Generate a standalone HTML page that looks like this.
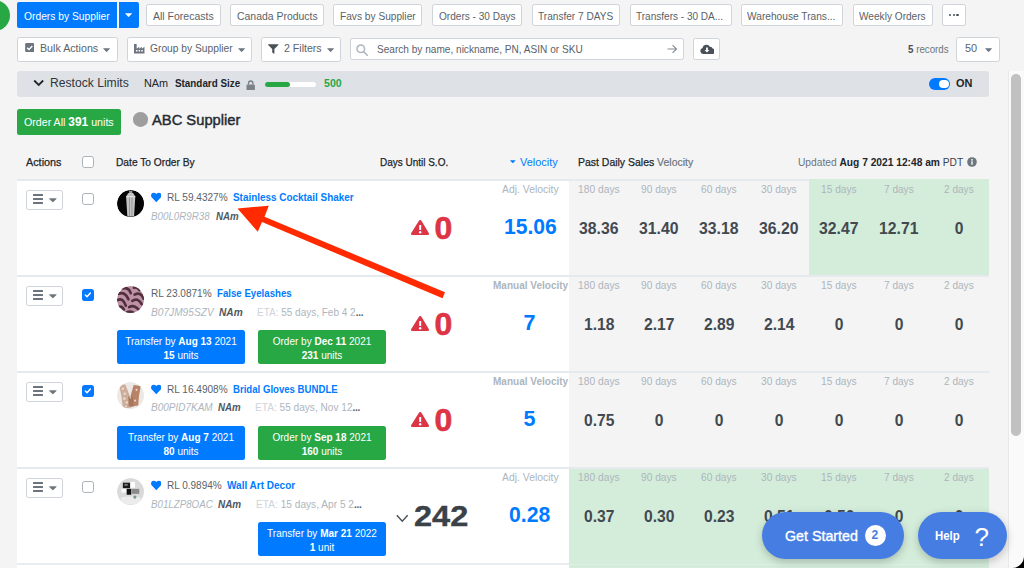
<!DOCTYPE html>
<html><head><meta charset="utf-8"><title>Orders by Supplier</title>
<style>
*{box-sizing:border-box;margin:0;padding:0}
html,body{width:1024px;height:568px;overflow:hidden;background:#f4f4f4;font-family:"Liberation Sans",sans-serif;font-size:11px;color:#212529}
.a{position:absolute;display:block}
.t{position:absolute;white-space:nowrap;display:block}
b{font-weight:bold}
</style></head><body>
<div class="a" style="left:-21.4px;top:-0.45px;width:31.5px;height:31.5px;background:#28a745;border-radius:15.75px;"></div>
<div class="a" style="left:17px;top:2px;width:99.5px;height:25.5px;background:#007bff;border-radius:2px;border-radius:2px 0 0 2px;"></div>
<div class="a" style="left:119px;top:2px;width:19.5px;height:25.5px;background:#007bff;border-radius:0 2px 2px 0;"></div>
<svg class="a" style="left:125.1px;top:13.2px" width="7.2" height="4.1" viewBox="0 0 7.8 4.4"><path d="M.5.2h6.800q.5.200.1.700L4.300 4.100q-.4.300-.8 0L.4.900Q0 .4.500.2z" fill="#fff"/></svg>
<div class="a" style="left:146.2px;top:3.9px;width:75.2px;height:21.8px;background:#fff;border:1px solid #ced4da;border-radius:2.5px;border-width:1.2px;"></div>
<div class="a" style="left:230.2px;top:3.9px;width:94.2px;height:21.8px;background:#fff;border:1px solid #ced4da;border-radius:2.5px;border-width:1.2px;"></div>
<div class="a" style="left:333.2px;top:3.9px;width:89.2px;height:21.8px;background:#fff;border:1px solid #ced4da;border-radius:2.5px;border-width:1.2px;"></div>
<div class="a" style="left:432.2px;top:3.9px;width:90.2px;height:21.8px;background:#fff;border:1px solid #ced4da;border-radius:2.5px;border-width:1.2px;"></div>
<div class="a" style="left:532.2px;top:3.9px;width:88.2px;height:21.8px;background:#fff;border:1px solid #ced4da;border-radius:2.5px;border-width:1.2px;"></div>
<div class="a" style="left:630.2px;top:3.9px;width:102.2px;height:21.8px;background:#fff;border:1px solid #ced4da;border-radius:2.5px;border-width:1.2px;"></div>
<div class="a" style="left:741.2px;top:3.9px;width:102.2px;height:21.8px;background:#fff;border:1px solid #ced4da;border-radius:2.5px;border-width:1.2px;"></div>
<div class="a" style="left:853.2px;top:3.9px;width:80.2px;height:21.8px;background:#fff;border:1px solid #ced4da;border-radius:2.5px;border-width:1.2px;"></div>
<div class="a" style="left:942.2px;top:3.9px;width:24.2px;height:21.8px;background:#fff;border:1px solid #ced4da;border-radius:2.5px;border-width:1.2px;"></div>
<div class="a" style="left:948.8px;top:13.7px;width:2.6px;height:2.6px;background:#495057;border-radius:1.3px;"></div>
<div class="a" style="left:952.5px;top:13.7px;width:2.6px;height:2.6px;background:#495057;border-radius:1.3px;"></div>
<div class="a" style="left:956.1999999999999px;top:13.7px;width:2.6px;height:2.6px;background:#495057;border-radius:1.3px;"></div>
<div class="a" style="left:17.3px;top:37px;width:100.60000000000001px;height:24.5px;background:#fff;border:1px solid #ced4da;border-radius:2.5px;border-width:1.2px;"></div>
<div class="a" style="left:127.3px;top:37px;width:125.00000000000001px;height:24.5px;background:#fff;border:1px solid #ced4da;border-radius:2.5px;border-width:1.2px;"></div>
<div class="a" style="left:261.3px;top:37px;width:80.0px;height:24.5px;background:#fff;border:1px solid #ced4da;border-radius:2.5px;border-width:1.2px;"></div>
<div class="a" style="left:956px;top:37px;width:43.799999999999955px;height:24.5px;background:#fff;border:1px solid #ced4da;border-radius:2.5px;border-width:1.2px;"></div>
<div class="a" style="left:350px;top:37.8px;width:334.3px;height:22.7px;background:#fff;border:1px solid #ced4da;border-radius:2.5px;border-width:1.2px;"></div>
<div class="a" style="left:692.8px;top:37.8px;width:26.8px;height:22.7px;background:#fff;border:1px solid #ced4da;border-radius:2.5px;border-width:1.2px;"></div>
<svg class="a" style="left:103.2px;top:47.6px" width="7.2" height="4.1" viewBox="0 0 7.8 4.4"><path d="M.5.2h6.800q.5.200.1.700L4.300 4.100q-.4.300-.8 0L.4.900Q0 .4.500.2z" fill="#6c757d"/></svg>
<svg class="a" style="left:238.2px;top:47.6px" width="7.2" height="4.1" viewBox="0 0 7.8 4.4"><path d="M.5.2h6.800q.5.200.1.700L4.300 4.100q-.4.300-.8 0L.4.900Q0 .4.500.2z" fill="#6c757d"/></svg>
<svg class="a" style="left:327.2px;top:47.6px" width="7.2" height="4.1" viewBox="0 0 7.8 4.4"><path d="M.5.2h6.800q.5.200.1.700L4.300 4.100q-.4.300-.8 0L.4.900Q0 .4.500.2z" fill="#6c757d"/></svg>
<svg class="a" style="left:985.2px;top:47.6px" width="7.2" height="4.1" viewBox="0 0 7.8 4.4"><path d="M.5.2h6.800q.5.200.1.700L4.300 4.100q-.4.300-.8 0L.4.900Q0 .4.500.2z" fill="#6c757d"/></svg>
<svg class="a" style="left:24.5px;top:43px;" width="9.4" height="9.1" viewBox="0 0 10 10"><rect width="10" height="10" rx="1.500" fill="#6c757d"/><path d="M2.2 5.2l2 2 3.7-3.9" fill="none" stroke="#fff" stroke-width="1.5"/></svg>
<svg class="a" style="left:134px;top:44px;" width="10.5" height="9.5" viewBox="0 0 11 10"><path d="M0 0h2.800v5l2.700-2v2l2.700-2v2L11 3v7H0z" fill="#6c757d"/><g fill="#fff"><rect x="2" y="6.3" width="1.6" height="1.6"/><rect x="4.8" y="6.3" width="1.6" height="1.6"/><rect x="7.6" y="6.3" width="1.6" height="1.6"/></g></svg>
<svg class="a" style="left:268px;top:44px;" width="10.5" height="10" viewBox="0 0 11 10"><path d="M0.3 0h10.4q.5.3.1.8L6.7 5v4.6q-.3.5-.8.2L4.4 8.6V5L.2.8Q-.1.3.3 0z" fill="#495057"/></svg>
<svg class="a" style="left:356px;top:43.5px;" width="12" height="12" viewBox="0 0 12 12"><circle cx="4.800" cy="4.800" r="3.800" fill="none" stroke="#adb5bd" stroke-width="1.500"/><path d="M7.700 7.700l3.500 3.500" stroke="#adb5bd" stroke-width="1.600" stroke-linecap="round"/></svg>
<svg class="a" style="left:667px;top:44px;" width="10.5" height="10" viewBox="0 0 11 10"><path d="M0.5 5h9.4M5.8 1l4.2 4-4.2 4" fill="none" stroke="#868e96" stroke-width="1.2"/></svg>
<svg class="a" style="left:699.5px;top:44px;" width="14" height="10" viewBox="0 0 14 10"><path d="M3.2 10a3 3 0 0 1-.6-5.9A3.9 3.9 0 0 1 10 2.9a2.4 2.4 0 0 1 2.600 1.6A2.800 2.800 0 0 1 11.300 10z" fill="#495057"/><path d="M6.100 3.600h1.800v2.400h1.500L7 8.600 4.600 6h1.500z" fill="#fff"/></svg>
<div class="a" style="left:17px;top:71px;width:971.8px;height:25.5px;background:#dee2e6;border-radius:3px;"></div>
<svg class="a" style="left:33.3px;top:78.5px;" width="11.4" height="8" viewBox="0 0 11.400 8"><path d="M1.200 1.500l4.500 4.400 4.500-4.400" fill="none" stroke="#212529" stroke-width="1.800"/></svg>
<svg class="a" style="left:246px;top:79.9px;" width="9.4" height="10.5" viewBox="0 0 9 10.5"><path d="M2.300 4.600V3.200a2.200 2.200 0 0 1 4.400 0v1.400" fill="none" stroke="#7b828a" stroke-width="1.400"/><rect x="0.300" y="4.500" width="8.400" height="5.800" rx="1" fill="#7b828a"/></svg>
<div class="a" style="left:265px;top:82px;width:51px;height:5px;background:#fff;border-radius:2.5px;"></div>
<div class="a" style="left:265px;top:82px;width:25px;height:5px;background:#28a745;border-radius:2.5px;"></div>
<div class="a" style="left:929px;top:77.6px;width:21px;height:12.6px;background:#007bff;border-radius:6.3px;"></div>
<div class="a" style="left:939.2px;top:79.8px;width:9.6px;height:8.2px;background:#fff;border-radius:4.1px;"></div>
<div class="a" style="left:17px;top:108.7px;width:104.3px;height:26.2px;background:#28a745;border-radius:2.5px;"></div>
<div class="a" style="left:133px;top:112px;width:14.5px;height:14.5px;background:#9e9e9e;border-radius:7.3px;"></div>
<div class="a" style="left:82px;top:155.6px;width:11.8px;height:12px;background:#fff;border:1px solid #aab3bb;border-radius:2.8px;border-width:1.3px;"></div>
<svg class="a" style="left:510px;top:160px" width="5.6" height="3.2" viewBox="0 0 7.8 4.4"><path d="M.5.2h6.800q.5.200.1.700L4.300 4.100q-.4.300-.8 0L.4.900Q0 .4.500.2z" fill="#007bff"/></svg>
<svg class="a" style="left:967px;top:157px;" width="10" height="10" viewBox="0 0 10 10"><circle cx="5" cy="5" r="4.800" fill="#6c757d"/><rect x="4.300" y="4.300" width="1.400" height="3.400" fill="#fff"/><circle cx="5" cy="2.800" r="0.900" fill="#fff"/></svg>
<div class="a" style="left:17px;top:563.8px;width:972px;height:6px;background:#fff;"></div>
<div class="a" style="left:569px;top:563.8px;width:419.5px;height:6px;background:#d4edda;"></div>
<div class="a" style="left:17px;top:563.0px;width:972px;height:1.7px;background:#e9ecef;"></div>
<div class="a" style="left:569px;top:563.0px;width:419.5px;height:1.7px;background:#dcefe2;"></div>
<div class="a" style="left:17px;top:179.9px;width:972px;height:95.15px;background:#fff;"></div>
<div class="a" style="left:17px;top:179.05px;width:972px;height:1.7px;background:#e6e9ed;"></div>
<div class="a" style="left:569px;top:180.70000000000002px;width:240px;height:95.15px;background:#f4f4f4;"></div>
<div class="a" style="left:809px;top:179.4px;width:179.5px;height:96.45px;background:#d4edda;"></div>
<div class="a" style="left:26.4px;top:190.15px;width:36.2px;height:19.6px;background:#fff;border:1px solid #ced4da;border-radius:2.5px;border-width:1.2px;"></div>
<div class="a" style="left:32.6px;top:194.4px;width:10.8px;height:1.9px;background:#6c757d;border-radius:0.5px;"></div>
<div class="a" style="left:32.6px;top:198.1px;width:10.8px;height:1.9px;background:#6c757d;border-radius:0.5px;"></div>
<div class="a" style="left:32.6px;top:201.8px;width:10.8px;height:1.9px;background:#6c757d;border-radius:0.5px;"></div>
<svg class="a" style="left:49.2px;top:198.3px;" width="7.8" height="4.4" viewBox="0 0 7.8 4.4"><path d="M.5.2h6.800q.5.200.1.700L4.300 4.100q-.4.300-.8 0L.4.900Q0 .4.500.2z" fill="#6c757d"/></svg>
<div class="a" style="left:82px;top:193.0px;width:11.8px;height:11.8px;background:#fff;border:1px solid #aab3bb;border-radius:2.8px;border-width:1.3px;"></div>
<svg class="a" style="left:116.8px;top:189.6px;border-radius:50%;overflow:hidden;" width="27.4" height="27.4" viewBox="0 0 28 28"><circle cx="14" cy="14" r="14" fill="#050505"/><path d="M12.400 0.800h3.200v2.300h-3.200z" fill="#9a9a9a"/><path d="M11.600 3h4.800l2.300 3.600-1.300 20.400h-6.800L9.300 6.600z" fill="#c4c4c4"/><path d="M12.300 7h.8v20h-.8zM14.900 7h.8v20h-.8z" fill="#8c8c8c"/><path d="M9.400 6.400h9.200v1h-9.200z" fill="#e6e6e6"/></svg>
<svg class="a" style="left:150.7px;top:191.8px;" width="10.6" height="10.6" viewBox="0 0 512 512"><path d="M462.300 62.600C407.500 15.900 326 24.300 275.700 76.200L256 96.500l-19.700-20.300C186.100 24.300 104.500 15.900 49.700 62.600c-62.800 53.600-66.100 149.800-9.900 207.900l193.500 199.800c12.500 12.900 32.800 12.900 45.300 0l193.500-199.800c56.300-58.100 53-154.300-9.800-207.900z" fill="#007bff"/></svg>
<svg class="a" style="left:410.8px;top:220.10000000000002px;" width="18.4" height="15" viewBox="0 0 18 15"><path d="M9 0q.9 0 1.400.9l7.300 12.300q.7 1.600-1 1.800H.9q-1.700-.2-1-1.800L7.600.9Q8.100 0 9 0z" fill="#dc3545"/><rect x="8" y="5" width="2" height="5" rx=".6" fill="#fff"/><circle cx="9" cy="12.200" r="1.200" fill="#fff"/></svg>
<div class="a" style="left:17px;top:275.85px;width:972px;height:95.15px;background:#fff;"></div>
<div class="a" style="left:17px;top:275.0px;width:972px;height:1.7px;background:#e6e9ed;"></div>
<div class="a" style="left:569px;top:276.65000000000003px;width:420px;height:95.15px;background:#f4f4f4;"></div>
<div class="a" style="left:26.4px;top:286.1px;width:36.2px;height:19.6px;background:#fff;border:1px solid #ced4da;border-radius:2.5px;border-width:1.2px;"></div>
<div class="a" style="left:32.6px;top:290.35px;width:10.8px;height:1.9px;background:#6c757d;border-radius:0.5px;"></div>
<div class="a" style="left:32.6px;top:294.05px;width:10.8px;height:1.9px;background:#6c757d;border-radius:0.5px;"></div>
<div class="a" style="left:32.6px;top:297.75px;width:10.8px;height:1.9px;background:#6c757d;border-radius:0.5px;"></div>
<svg class="a" style="left:49.2px;top:294.25px;" width="7.8" height="4.4" viewBox="0 0 7.8 4.4"><path d="M.5.2h6.800q.5.200.1.700L4.300 4.100q-.4.300-.8 0L.4.900Q0 .4.500.2z" fill="#6c757d"/></svg>
<div class="a" style="left:82px;top:288.95000000000005px;width:11.8px;height:11.8px;background:#0479ff;border-radius:2.8px;"></div>
<svg class="a" style="left:82px;top:288.95000000000005px;" width="11.8" height="11.8" viewBox="0 0 12 12"><path d="M3.400 6.100l1.700 1.700 3.400-3.700" fill="none" stroke="#fff" stroke-width="1.500" stroke-linecap="round" stroke-linejoin="round"/></svg>
<svg class="a" style="left:116.8px;top:285.55px;border-radius:50%;overflow:hidden;" width="27.4" height="27.4" viewBox="0 0 28 28"><circle cx="14" cy="14" r="14" fill="#bf91a6"/><g fill="none" stroke="#4f303b" stroke-width="2.700" stroke-linecap="round"><path d="M5.400 2.500Q12 1 14 7.300M1.400 8.100Q8 5 11.700 13.600M.6 14.400Q6 11.500 9 20M1.400 21.600Q5 20 7 24M17.300 1.700Q21 1 22.900 4.100M18 8.900Q24 5.500 27.200 12.900M15.700 15.200Q21 11.500 25.200 18.400M12.500 21.600Q17 18.500 22 24M10 27Q13 25.500 16.500 27"/></g></svg>
<div class="a" style="left:116.9px;top:330.3px;width:127.8px;height:34.1px;background:#007bff;border-radius:2.5px;"></div>
<div class="a" style="left:258.4px;top:330.3px;width:127.8px;height:34.1px;background:#28a745;border-radius:2.5px;"></div>
<svg class="a" style="left:410.8px;top:316.05px;" width="18.4" height="15" viewBox="0 0 18 15"><path d="M9 0q.9 0 1.400.9l7.300 12.300q.7 1.600-1 1.800H.9q-1.700-.2-1-1.800L7.600.9Q8.100 0 9 0z" fill="#dc3545"/><rect x="8" y="5" width="2" height="5" rx=".6" fill="#fff"/><circle cx="9" cy="12.200" r="1.200" fill="#fff"/></svg>
<div class="a" style="left:17px;top:371.85px;width:972px;height:95.15px;background:#fff;"></div>
<div class="a" style="left:17px;top:371.0px;width:972px;height:1.7px;background:#e6e9ed;"></div>
<div class="a" style="left:569px;top:372.65000000000003px;width:420px;height:95.15px;background:#f4f4f4;"></div>
<div class="a" style="left:26.4px;top:382.1px;width:36.2px;height:19.6px;background:#fff;border:1px solid #ced4da;border-radius:2.5px;border-width:1.2px;"></div>
<div class="a" style="left:32.6px;top:386.35px;width:10.8px;height:1.9px;background:#6c757d;border-radius:0.5px;"></div>
<div class="a" style="left:32.6px;top:390.05px;width:10.8px;height:1.9px;background:#6c757d;border-radius:0.5px;"></div>
<div class="a" style="left:32.6px;top:393.75px;width:10.8px;height:1.9px;background:#6c757d;border-radius:0.5px;"></div>
<svg class="a" style="left:49.2px;top:390.25px;" width="7.8" height="4.4" viewBox="0 0 7.8 4.4"><path d="M.5.2h6.800q.5.200.1.700L4.300 4.100q-.4.300-.8 0L.4.900Q0 .4.500.2z" fill="#6c757d"/></svg>
<div class="a" style="left:82px;top:384.95000000000005px;width:11.8px;height:11.8px;background:#0479ff;border-radius:2.8px;"></div>
<svg class="a" style="left:82px;top:384.95000000000005px;" width="11.8" height="11.8" viewBox="0 0 12 12"><path d="M3.400 6.100l1.700 1.700 3.400-3.700" fill="none" stroke="#fff" stroke-width="1.500" stroke-linecap="round" stroke-linejoin="round"/></svg>
<svg class="a" style="left:116.8px;top:381.55px;border-radius:50%;overflow:hidden;" width="27.4" height="27.4" viewBox="0 0 28 28"><circle cx="14" cy="14" r="14" fill="#ebe8e6"/><path d="M2 3L8.500 2.500 13 14 15 26 6 27 4.500 14z" fill="#cdad99"/><path d="M17 3L24.300 4 22.400 14.500 21.700 24 14.500 25 13.800 14.500z" fill="#b98368"/><path d="M11.500 14l2.500 3.500 2-3.500 1 11h-5z" fill="#a8765c"/><g fill="#e6dad0"><circle cx="6" cy="7" r="1.300"/><circle cx="8" cy="12" r="1.300"/><circle cx="7.500" cy="17" r="1.300"/><circle cx="10" cy="21" r="1.300"/><circle cx="9" cy="25" r="1.100"/><circle cx="20" cy="8" r="1.100"/><circle cx="18.500" cy="19" r="1.100"/></g></svg>
<svg class="a" style="left:150.7px;top:383.75px;" width="10.6" height="10.6" viewBox="0 0 512 512"><path d="M462.300 62.600C407.500 15.900 326 24.300 275.700 76.200L256 96.500l-19.700-20.300C186.100 24.300 104.500 15.900 49.700 62.600c-62.800 53.600-66.100 149.800-9.900 207.900l193.500 199.800c12.500 12.900 32.800 12.900 45.300 0l193.500-199.800c56.300-58.100 53-154.300-9.800-207.900z" fill="#007bff"/></svg>
<div class="a" style="left:116.9px;top:426.3px;width:127.8px;height:34.1px;background:#007bff;border-radius:2.5px;"></div>
<div class="a" style="left:258.4px;top:426.3px;width:127.8px;height:34.1px;background:#28a745;border-radius:2.5px;"></div>
<svg class="a" style="left:410.8px;top:412.05px;" width="18.4" height="15" viewBox="0 0 18 15"><path d="M9 0q.9 0 1.400.9l7.300 12.300q.7 1.600-1 1.800H.9q-1.700-.2-1-1.800L7.600.9Q8.100 0 9 0z" fill="#dc3545"/><rect x="8" y="5" width="2" height="5" rx=".6" fill="#fff"/><circle cx="9" cy="12.200" r="1.200" fill="#fff"/></svg>
<div class="a" style="left:17px;top:467.8px;width:972px;height:95.15px;background:#fff;"></div>
<div class="a" style="left:17px;top:466.95px;width:972px;height:1.7px;background:#e6e9ed;"></div>
<div class="a" style="left:569px;top:468.5px;width:419.5px;height:95.25px;background:#d4edda;"></div>
<div class="a" style="left:26.4px;top:478.05px;width:36.2px;height:19.6px;background:#fff;border:1px solid #ced4da;border-radius:2.5px;border-width:1.2px;"></div>
<div class="a" style="left:32.6px;top:482.3px;width:10.8px;height:1.9px;background:#6c757d;border-radius:0.5px;"></div>
<div class="a" style="left:32.6px;top:486.0px;width:10.8px;height:1.9px;background:#6c757d;border-radius:0.5px;"></div>
<div class="a" style="left:32.6px;top:489.7px;width:10.8px;height:1.9px;background:#6c757d;border-radius:0.5px;"></div>
<svg class="a" style="left:49.2px;top:486.2px;" width="7.8" height="4.4" viewBox="0 0 7.8 4.4"><path d="M.5.2h6.800q.5.200.1.700L4.300 4.100q-.4.300-.8 0L.4.900Q0 .4.500.2z" fill="#6c757d"/></svg>
<div class="a" style="left:82px;top:480.90000000000003px;width:11.8px;height:11.8px;background:#fff;border:1px solid #aab3bb;border-radius:2.8px;border-width:1.3px;"></div>
<svg class="a" style="left:116.8px;top:477.5px;border-radius:50%;overflow:hidden;" width="27.4" height="27.4" viewBox="0 0 28 28"><circle cx="14" cy="14" r="14" fill="#dadada"/><rect x="6" y="4.800" width="7.300" height="5.600" fill="#1a1a1a"/><rect x="14" y="4" width="4.400" height="6" fill="#fdfdfd"/><rect x="9.900" y="11.100" width="4.700" height="6" fill="#111"/><rect x="15.200" y="11.100" width="7.600" height="5.100" fill="#8b8b8b"/><rect x="4.400" y="11.100" width="4.900" height="3.900" fill="#f8f8f8"/><path d="M4 20q10-2 20 0v5q-10 4-20 0z" fill="#ececec"/><circle cx="18.300" cy="19.500" r="1.600" fill="#6f9a83"/><rect x="7.500" y="6" width="3.500" height="2" fill="#777"/></svg>
<svg class="a" style="left:150.7px;top:479.7px;" width="10.6" height="10.6" viewBox="0 0 512 512"><path d="M462.300 62.600C407.500 15.900 326 24.300 275.700 76.200L256 96.500l-19.700-20.300C186.100 24.300 104.500 15.900 49.700 62.600c-62.800 53.600-66.100 149.800-9.900 207.900l193.500 199.800c12.500 12.900 32.800 12.900 45.300 0l193.500-199.800c56.300-58.100 53-154.300-9.800-207.900z" fill="#007bff"/></svg>
<div class="a" style="left:258.4px;top:522.25px;width:127.8px;height:34.1px;background:#007bff;border-radius:2.5px;"></div>
<svg class="a" style="left:396px;top:514.1px;" width="12.5" height="9" viewBox="0 0 12.5 9"><path d="M.8 1.200l5.450 6 5.450-6" fill="none" stroke="#495057" stroke-width="1.400"/></svg>
<div class="t" style="left:24.16px;top:8.60px;font-size:11.2px;line-height:15px;color:#fff;transform-origin:0 50%;transform:scaleX(0.9184);">Orders by Supplier</div>
<div class="t" style="left:153.16px;top:8.60px;font-size:11.2px;line-height:15px;color:#5a6268;transform-origin:0 50%;transform:scaleX(0.9384);">All Forecasts</div>
<div class="t" style="left:236.66px;top:8.60px;font-size:11.2px;line-height:15px;color:#5a6268;transform-origin:0 50%;transform:scaleX(0.9331);">Canada Products</div>
<div class="t" style="left:340.16px;top:8.60px;font-size:11.2px;line-height:15px;color:#5a6268;transform-origin:0 50%;transform:scaleX(0.9081);">Favs by Supplier</div>
<div class="t" style="left:438.66px;top:8.60px;font-size:11.2px;line-height:15px;color:#5a6268;transform-origin:0 50%;transform:scaleX(0.9000);">Orders - 30 Days</div>
<div class="t" style="left:538.16px;top:8.60px;font-size:11.2px;line-height:15px;color:#5a6268;transform-origin:0 50%;transform:scaleX(0.9023);">Transfer 7 DAYS</div>
<div class="t" style="left:636.16px;top:8.60px;font-size:11.2px;line-height:15px;color:#5a6268;transform-origin:0 50%;transform:scaleX(0.8968);">Transfers - 30 DA...</div>
<div class="t" style="left:747.41px;top:8.60px;font-size:11.2px;line-height:15px;color:#5a6268;transform-origin:0 50%;transform:scaleX(0.9095);">Warehouse Trans...</div>
<div class="t" style="left:859.16px;top:8.60px;font-size:11.2px;line-height:15px;color:#5a6268;transform-origin:0 50%;transform:scaleX(0.9036);">Weekly Orders</div>
<div class="t" style="left:39.66px;top:41.00px;font-size:11.2px;line-height:15px;color:#5a6268;transform-origin:0 50%;transform:scaleX(0.9544);">Bulk Actions</div>
<div class="t" style="left:149.66px;top:41.00px;font-size:11.2px;line-height:15px;color:#5a6268;transform-origin:0 50%;transform:scaleX(0.9167);">Group by Supplier</div>
<div class="t" style="left:283.66px;top:41.00px;font-size:11.2px;line-height:15px;color:#5a6268;transform-origin:0 50%;transform:scaleX(0.9466);">2 Filters</div>
<div class="t" style="left:376.66px;top:42.00px;font-size:11.2px;line-height:15px;color:#5a6169;transform-origin:0 50%;transform:scaleX(0.9013);">Search by name, nickname, PN, ASIN or SKU</div>
<div class="t" style="left:907.66px;top:42.00px;font-size:11.2px;line-height:15px;color:#6c757d;transform-origin:0 50%;transform:scaleX(0.8717);"><b style="color:#495057">5</b> records</div>
<div class="t" style="left:964.66px;top:41.00px;font-size:11.2px;line-height:15px;color:#5a6268;transform-origin:0 50%;transform:scaleX(0.9774);">50</div>
<div class="t" style="left:49.90px;top:74.30px;font-size:13.2px;line-height:17px;color:#2f353b;transform-origin:0 50%;transform:scaleX(0.9189);">Restock Limits</div>
<div class="t" style="left:144.16px;top:75.50px;font-size:11.2px;line-height:15px;color:#212529;transform-origin:0 50%;transform:scaleX(0.9717);">NAm</div>
<div class="t" style="left:174.66px;top:75.50px;font-size:11.2px;line-height:15px;color:#212529;font-weight:bold;transform-origin:0 50%;transform:scaleX(0.8809);">Standard Size</div>
<div class="t" style="left:323.66px;top:75.50px;font-size:11.2px;line-height:15px;color:#28a745;font-weight:bold;transform-origin:0 50%;transform:scaleX(0.9465);">500</div>
<div class="t" style="left:955.95px;top:76.00px;font-size:11.5px;line-height:15px;color:#212529;font-weight:bold;transform-origin:0 50%;transform:scaleX(0.9501);">ON</div>
<div class="t" style="left:24.16px;top:114.50px;font-size:11.2px;line-height:15px;color:#fff;transform-origin:0 50%;transform:scaleX(0.9514);">Order All <b style="font-size:12.5px">391</b> units</div>
<div class="t" style="left:151.55px;top:109.50px;font-size:15px;line-height:20px;color:#262b30;transform-origin:0 50%;transform:scaleX(0.9817);-webkit-text-stroke:0.45px #262b30;">ABC Supplier</div>
<div class="t" style="left:26.36px;top:154.50px;font-size:11.2px;line-height:15px;color:#212529;transform-origin:0 50%;transform:scaleX(0.9669);-webkit-text-stroke:0.25px #212529;">Actions</div>
<div class="t" style="left:115.66px;top:154.50px;font-size:11.2px;line-height:15px;color:#212529;transform-origin:0 50%;transform:scaleX(0.9123);-webkit-text-stroke:0.25px #212529;">Date To Order By</div>
<div class="t" style="left:380.16px;top:154.50px;font-size:11.2px;line-height:15px;color:#212529;transform-origin:0 50%;transform:scaleX(0.8915);-webkit-text-stroke:0.25px #212529;">Days Until S.O.</div>
<div class="t" style="left:519.66px;top:154.50px;font-size:11.2px;line-height:15px;color:#007bff;transform-origin:0 50%;transform:scaleX(0.9769);">Velocity</div>
<div class="t" style="left:577.66px;top:154.50px;font-size:11.2px;line-height:15px;color:#212529;transform-origin:0 50%;transform:scaleX(0.9353);"><span style="-webkit-text-stroke:0.25px #212529">Past Daily Sales</span> <span style="color:#6c757d;-webkit-text-stroke:0.2px #6c757d">Velocity</span></div>
<div class="t" style="left:798.16px;top:154.50px;font-size:11.2px;line-height:15px;color:#3d444b;transform-origin:0 50%;transform:scaleX(0.9126);"><span style="color:#6c757d">Updated</span> <b style="color:#212529">Aug 7 2021 12:48 am</b> PDT</div>
<div class="t" style="left:166.66px;top:189.80px;font-size:11.2px;line-height:15px;color:#5a6268;transform-origin:0 50%;transform:scaleX(0.9003);">RL 59.4327%</div>
<div class="t" style="left:232.66px;top:189.80px;font-size:11.2px;line-height:15px;color:#007bff;font-weight:bold;transform-origin:0 50%;transform:scaleX(0.8861);">Stainless Cocktail Shaker</div>
<div class="t" style="left:150.66px;top:208.50px;font-size:11.2px;line-height:15px;color:#adb5bd;font-style:italic;transform-origin:0 50%;transform:scaleX(0.8733);">B00L0R9R38</div>
<div class="t" style="left:215.66px;top:208.50px;font-size:11.2px;line-height:15px;color:#50575e;font-weight:bold;font-style:italic;transform-origin:0 50%;transform:scaleX(0.8683);">NAm</div>
<div class="t" style="left:434.60px;top:206.90px;font-size:32px;line-height:42px;color:#dc3545;font-weight:bold;transform-origin:0 50%;transform:scaleX(1.0000);-webkit-text-stroke:0.6px #dc3545;">0</div>
<div class="t" style="left:501.66px;top:182.40px;font-size:11.2px;line-height:15px;color:#adb5bd;transform-origin:0 50%;transform:scaleX(0.9298);">Adj. Velocity</div>
<div class="t" style="left:503.86px;top:213.20px;font-size:21.5px;line-height:28px;color:#007bff;font-weight:bold;transform-origin:0 50%;transform:scaleX(0.9810);">15.06</div>
<div class="t" style="left:578.16px;top:182.40px;font-size:11.2px;line-height:15px;color:#adb5bd;transform-origin:0 50%;transform:scaleX(0.9178);">180 days</div>
<div class="t" style="left:579.28px;top:218.60px;font-size:15.6px;line-height:20px;color:#424950;font-weight:bold;transform-origin:0 50%;transform:scaleX(1.0104);">38.36</div>
<div class="t" style="left:641.16px;top:182.40px;font-size:11.2px;line-height:15px;color:#adb5bd;transform-origin:0 50%;transform:scaleX(0.9103);">90 days</div>
<div class="t" style="left:639.28px;top:218.60px;font-size:15.6px;line-height:20px;color:#424950;font-weight:bold;transform-origin:0 50%;transform:scaleX(1.0104);">31.40</div>
<div class="t" style="left:701.16px;top:182.40px;font-size:11.2px;line-height:15px;color:#adb5bd;transform-origin:0 50%;transform:scaleX(0.9103);">60 days</div>
<div class="t" style="left:699.28px;top:218.60px;font-size:15.6px;line-height:20px;color:#424950;font-weight:bold;transform-origin:0 50%;transform:scaleX(1.0104);">33.18</div>
<div class="t" style="left:761.16px;top:182.40px;font-size:11.2px;line-height:15px;color:#adb5bd;transform-origin:0 50%;transform:scaleX(0.9103);">30 days</div>
<div class="t" style="left:759.28px;top:218.60px;font-size:15.6px;line-height:20px;color:#424950;font-weight:bold;transform-origin:0 50%;transform:scaleX(1.0104);">36.20</div>
<div class="t" style="left:821.16px;top:182.40px;font-size:11.2px;line-height:15px;color:#adb5bd;transform-origin:0 50%;transform:scaleX(0.9103);">15 days</div>
<div class="t" style="left:819.28px;top:218.60px;font-size:15.6px;line-height:20px;color:#424950;font-weight:bold;transform-origin:0 50%;transform:scaleX(1.0104);">32.47</div>
<div class="t" style="left:884.16px;top:182.40px;font-size:11.2px;line-height:15px;color:#adb5bd;transform-origin:0 50%;transform:scaleX(0.9000);">7 days</div>
<div class="t" style="left:879.28px;top:218.60px;font-size:15.6px;line-height:20px;color:#424950;font-weight:bold;transform-origin:0 50%;transform:scaleX(1.0104);">12.71</div>
<div class="t" style="left:944.16px;top:182.40px;font-size:11.2px;line-height:15px;color:#adb5bd;transform-origin:0 50%;transform:scaleX(0.9000);">2 days</div>
<div class="t" style="left:954.66px;top:218.60px;font-size:15.6px;line-height:20px;color:#424950;font-weight:bold;transform-origin:0 50%;transform:scaleX(1.0000);">0</div>
<div class="t" style="left:150.66px;top:285.75px;font-size:11.2px;line-height:15px;color:#5a6268;transform-origin:0 50%;transform:scaleX(0.9003);">RL 23.0871%</div>
<div class="t" style="left:216.66px;top:285.75px;font-size:11.2px;line-height:15px;color:#007bff;font-weight:bold;transform-origin:0 50%;transform:scaleX(0.8637);">False Eyelashes</div>
<div class="t" style="left:150.66px;top:305.15px;font-size:11.2px;line-height:15px;color:#adb5bd;font-style:italic;transform-origin:0 50%;transform:scaleX(0.9079);">B07JM95SZV</div>
<div class="t" style="left:218.66px;top:305.15px;font-size:11.2px;line-height:15px;color:#50575e;font-weight:bold;font-style:italic;transform-origin:0 50%;transform:scaleX(0.9066);">NAm</div>
<div class="t" style="left:256.66px;top:305.15px;font-size:11.2px;line-height:15px;color:#adb5bd;transform-origin:0 50%;transform:scaleX(0.8927);"><span style="color:#ced4da">ETA:</span> 55 days, Feb 4 2<b style="color:#5a6268;letter-spacing:-0.3px">...</b></div>
<div class="t" style="left:434.60px;top:302.85px;font-size:32px;line-height:42px;color:#dc3545;font-weight:bold;transform-origin:0 50%;transform:scaleX(1.0000);-webkit-text-stroke:0.6px #dc3545;">0</div>
<div class="t" style="left:493.16px;top:278.35px;font-size:11.2px;line-height:15px;color:#adb5bd;font-weight:bold;transform-origin:0 50%;transform:scaleX(0.8956);">Manual Velocity</div>
<div class="t" style="left:523.52px;top:309.15px;font-size:21.5px;line-height:28px;color:#007bff;font-weight:bold;transform-origin:0 50%;transform:scaleX(1.0000);">7</div>
<div class="t" style="left:578.16px;top:278.35px;font-size:11.2px;line-height:15px;color:#adb5bd;transform-origin:0 50%;transform:scaleX(0.9178);">180 days</div>
<div class="t" style="left:583.78px;top:314.55px;font-size:15.6px;line-height:20px;color:#424950;font-weight:bold;transform-origin:0 50%;transform:scaleX(1.0025);">1.18</div>
<div class="t" style="left:641.16px;top:278.35px;font-size:11.2px;line-height:15px;color:#adb5bd;transform-origin:0 50%;transform:scaleX(0.9103);">90 days</div>
<div class="t" style="left:643.78px;top:314.55px;font-size:15.6px;line-height:20px;color:#424950;font-weight:bold;transform-origin:0 50%;transform:scaleX(1.0025);">2.17</div>
<div class="t" style="left:701.16px;top:278.35px;font-size:11.2px;line-height:15px;color:#adb5bd;transform-origin:0 50%;transform:scaleX(0.9103);">60 days</div>
<div class="t" style="left:703.78px;top:314.55px;font-size:15.6px;line-height:20px;color:#424950;font-weight:bold;transform-origin:0 50%;transform:scaleX(1.0025);">2.89</div>
<div class="t" style="left:761.16px;top:278.35px;font-size:11.2px;line-height:15px;color:#adb5bd;transform-origin:0 50%;transform:scaleX(0.9103);">30 days</div>
<div class="t" style="left:763.78px;top:314.55px;font-size:15.6px;line-height:20px;color:#424950;font-weight:bold;transform-origin:0 50%;transform:scaleX(1.0025);">2.14</div>
<div class="t" style="left:821.16px;top:278.35px;font-size:11.2px;line-height:15px;color:#adb5bd;transform-origin:0 50%;transform:scaleX(0.9103);">15 days</div>
<div class="t" style="left:834.66px;top:314.55px;font-size:15.6px;line-height:20px;color:#424950;font-weight:bold;transform-origin:0 50%;transform:scaleX(1.0000);">0</div>
<div class="t" style="left:884.16px;top:278.35px;font-size:11.2px;line-height:15px;color:#adb5bd;transform-origin:0 50%;transform:scaleX(0.9000);">7 days</div>
<div class="t" style="left:894.66px;top:314.55px;font-size:15.6px;line-height:20px;color:#424950;font-weight:bold;transform-origin:0 50%;transform:scaleX(1.0000);">0</div>
<div class="t" style="left:944.16px;top:278.35px;font-size:11.2px;line-height:15px;color:#adb5bd;transform-origin:0 50%;transform:scaleX(0.9000);">2 days</div>
<div class="t" style="left:954.66px;top:314.55px;font-size:15.6px;line-height:20px;color:#424950;font-weight:bold;transform-origin:0 50%;transform:scaleX(1.0000);">0</div>
<div class="t" style="left:166.66px;top:381.75px;font-size:11.2px;line-height:15px;color:#5a6268;transform-origin:0 50%;transform:scaleX(0.9003);">RL 16.4908%</div>
<div class="t" style="left:232.66px;top:381.75px;font-size:11.2px;line-height:15px;color:#007bff;font-weight:bold;transform-origin:0 50%;transform:scaleX(0.8590);">Bridal Gloves BUNDLE</div>
<div class="t" style="left:150.66px;top:400.45px;font-size:11.2px;line-height:15px;color:#adb5bd;font-style:italic;transform-origin:0 50%;transform:scaleX(0.8934);">B00PID7KAM</div>
<div class="t" style="left:217.66px;top:400.45px;font-size:11.2px;line-height:15px;color:#50575e;font-weight:bold;font-style:italic;transform-origin:0 50%;transform:scaleX(0.8683);">NAm</div>
<div class="t" style="left:255.16px;top:400.45px;font-size:11.2px;line-height:15px;color:#adb5bd;transform-origin:0 50%;transform:scaleX(0.9031);"><span style="color:#ced4da">ETA:</span> 55 days, Nov 12<b style="color:#5a6268;letter-spacing:-0.3px">...</b></div>
<div class="t" style="left:434.60px;top:398.85px;font-size:32px;line-height:42px;color:#dc3545;font-weight:bold;transform-origin:0 50%;transform:scaleX(1.0000);-webkit-text-stroke:0.6px #dc3545;">0</div>
<div class="t" style="left:493.16px;top:374.35px;font-size:11.2px;line-height:15px;color:#adb5bd;font-weight:bold;transform-origin:0 50%;transform:scaleX(0.8956);">Manual Velocity</div>
<div class="t" style="left:523.52px;top:405.15px;font-size:21.5px;line-height:28px;color:#007bff;font-weight:bold;transform-origin:0 50%;transform:scaleX(1.0000);">5</div>
<div class="t" style="left:578.16px;top:374.35px;font-size:11.2px;line-height:15px;color:#adb5bd;transform-origin:0 50%;transform:scaleX(0.9178);">180 days</div>
<div class="t" style="left:583.78px;top:410.55px;font-size:15.6px;line-height:20px;color:#424950;font-weight:bold;transform-origin:0 50%;transform:scaleX(1.0025);">0.75</div>
<div class="t" style="left:641.16px;top:374.35px;font-size:11.2px;line-height:15px;color:#adb5bd;transform-origin:0 50%;transform:scaleX(0.9103);">90 days</div>
<div class="t" style="left:654.66px;top:410.55px;font-size:15.6px;line-height:20px;color:#424950;font-weight:bold;transform-origin:0 50%;transform:scaleX(1.0000);">0</div>
<div class="t" style="left:701.16px;top:374.35px;font-size:11.2px;line-height:15px;color:#adb5bd;transform-origin:0 50%;transform:scaleX(0.9103);">60 days</div>
<div class="t" style="left:714.66px;top:410.55px;font-size:15.6px;line-height:20px;color:#424950;font-weight:bold;transform-origin:0 50%;transform:scaleX(1.0000);">0</div>
<div class="t" style="left:761.16px;top:374.35px;font-size:11.2px;line-height:15px;color:#adb5bd;transform-origin:0 50%;transform:scaleX(0.9103);">30 days</div>
<div class="t" style="left:774.66px;top:410.55px;font-size:15.6px;line-height:20px;color:#424950;font-weight:bold;transform-origin:0 50%;transform:scaleX(1.0000);">0</div>
<div class="t" style="left:821.16px;top:374.35px;font-size:11.2px;line-height:15px;color:#adb5bd;transform-origin:0 50%;transform:scaleX(0.9103);">15 days</div>
<div class="t" style="left:834.66px;top:410.55px;font-size:15.6px;line-height:20px;color:#424950;font-weight:bold;transform-origin:0 50%;transform:scaleX(1.0000);">0</div>
<div class="t" style="left:884.16px;top:374.35px;font-size:11.2px;line-height:15px;color:#adb5bd;transform-origin:0 50%;transform:scaleX(0.9000);">7 days</div>
<div class="t" style="left:894.66px;top:410.55px;font-size:15.6px;line-height:20px;color:#424950;font-weight:bold;transform-origin:0 50%;transform:scaleX(1.0000);">0</div>
<div class="t" style="left:944.16px;top:374.35px;font-size:11.2px;line-height:15px;color:#adb5bd;transform-origin:0 50%;transform:scaleX(0.9000);">2 days</div>
<div class="t" style="left:954.66px;top:410.55px;font-size:15.6px;line-height:20px;color:#424950;font-weight:bold;transform-origin:0 50%;transform:scaleX(1.0000);">0</div>
<div class="t" style="left:166.66px;top:477.70px;font-size:11.2px;line-height:15px;color:#5a6268;transform-origin:0 50%;transform:scaleX(0.8937);">RL 0.9894%</div>
<div class="t" style="left:226.66px;top:477.70px;font-size:11.2px;line-height:15px;color:#007bff;font-weight:bold;transform-origin:0 50%;transform:scaleX(0.8939);">Wall Art Decor</div>
<div class="t" style="left:150.66px;top:497.10px;font-size:11.2px;line-height:15px;color:#adb5bd;font-style:italic;transform-origin:0 50%;transform:scaleX(0.8700);">B01LZP8OAC</div>
<div class="t" style="left:218.16px;top:497.10px;font-size:11.2px;line-height:15px;color:#50575e;font-weight:bold;font-style:italic;transform-origin:0 50%;transform:scaleX(0.8875);">NAm</div>
<div class="t" style="left:255.66px;top:497.10px;font-size:11.2px;line-height:15px;color:#adb5bd;transform-origin:0 50%;transform:scaleX(0.9074);"><span style="color:#ced4da">ETA:</span> 15 days, Apr 5 2<b style="color:#5a6268;letter-spacing:-0.3px">...</b></div>
<div class="t" style="left:414.40px;top:495.60px;font-size:30px;line-height:39px;color:#3a4147;font-weight:bold;transform-origin:0 50%;transform:scaleX(1.0826);-webkit-text-stroke:0.4px #3a4147;">242</div>
<div class="t" style="left:501.66px;top:470.30px;font-size:11.2px;line-height:15px;color:#adb5bd;transform-origin:0 50%;transform:scaleX(0.9298);">Adj. Velocity</div>
<div class="t" style="left:509.36px;top:501.10px;font-size:21.5px;line-height:28px;color:#007bff;font-weight:bold;transform-origin:0 50%;transform:scaleX(0.9864);">0.28</div>
<div class="t" style="left:578.16px;top:470.30px;font-size:11.2px;line-height:15px;color:#adb5bd;transform-origin:0 50%;transform:scaleX(0.9178);">180 days</div>
<div class="t" style="left:583.78px;top:506.50px;font-size:15.6px;line-height:20px;color:#424950;font-weight:bold;transform-origin:0 50%;transform:scaleX(1.0025);">0.37</div>
<div class="t" style="left:641.16px;top:470.30px;font-size:11.2px;line-height:15px;color:#adb5bd;transform-origin:0 50%;transform:scaleX(0.9103);">90 days</div>
<div class="t" style="left:643.78px;top:506.50px;font-size:15.6px;line-height:20px;color:#424950;font-weight:bold;transform-origin:0 50%;transform:scaleX(1.0025);">0.30</div>
<div class="t" style="left:701.16px;top:470.30px;font-size:11.2px;line-height:15px;color:#adb5bd;transform-origin:0 50%;transform:scaleX(0.9103);">60 days</div>
<div class="t" style="left:703.78px;top:506.50px;font-size:15.6px;line-height:20px;color:#424950;font-weight:bold;transform-origin:0 50%;transform:scaleX(1.0025);">0.23</div>
<div class="t" style="left:761.16px;top:470.30px;font-size:11.2px;line-height:15px;color:#adb5bd;transform-origin:0 50%;transform:scaleX(0.9103);">30 days</div>
<div class="t" style="left:763.78px;top:506.50px;font-size:15.6px;line-height:20px;color:#424950;font-weight:bold;transform-origin:0 50%;transform:scaleX(1.0025);">0.51</div>
<div class="t" style="left:821.16px;top:470.30px;font-size:11.2px;line-height:15px;color:#adb5bd;transform-origin:0 50%;transform:scaleX(0.9103);">15 days</div>
<div class="t" style="left:823.78px;top:506.50px;font-size:15.6px;line-height:20px;color:#424950;font-weight:bold;transform-origin:0 50%;transform:scaleX(1.0025);">0.50</div>
<div class="t" style="left:884.16px;top:470.30px;font-size:11.2px;line-height:15px;color:#adb5bd;transform-origin:0 50%;transform:scaleX(0.9000);">7 days</div>
<div class="t" style="left:894.66px;top:506.50px;font-size:15.6px;line-height:20px;color:#424950;font-weight:bold;transform-origin:0 50%;transform:scaleX(1.0000);">0</div>
<div class="t" style="left:944.16px;top:470.30px;font-size:11.2px;line-height:15px;color:#adb5bd;transform-origin:0 50%;transform:scaleX(0.9000);">2 days</div>
<div class="t" style="left:954.66px;top:506.50px;font-size:15.6px;line-height:20px;color:#424950;font-weight:bold;transform-origin:0 50%;transform:scaleX(1.0000);">0</div>
<div class="a" style="left:106.9px;top:333.60px;width:148px;text-align:center;color:#fff;font-size:11.2px;line-height:14px;transform:scaleX(.895)">Transfer by <b>Aug 13</b> 2021<br><b>15</b> units</div>
<div class="a" style="left:248.4px;top:333.60px;width:148px;text-align:center;color:#fff;font-size:11.2px;line-height:14px;transform:scaleX(.895)">Order by <b>Dec 11</b> 2021<br><b>231</b> units</div>
<div class="a" style="left:106.9px;top:429.60px;width:148px;text-align:center;color:#fff;font-size:11.2px;line-height:14px;transform:scaleX(.895)">Transfer by <b>Aug 7</b> 2021<br><b>80</b> units</div>
<div class="a" style="left:248.4px;top:429.60px;width:148px;text-align:center;color:#fff;font-size:11.2px;line-height:14px;transform:scaleX(.895)">Order by <b>Sep 18</b> 2021<br><b>160</b> units</div>
<div class="a" style="left:248.4px;top:525.55px;width:148px;text-align:center;color:#fff;font-size:11.2px;line-height:14px;transform:scaleX(.895)">Transfer by <b>Mar 21</b> 2022<br><b>1</b> unit</div>
<svg class="a" style="left:0;top:0" width="1024" height="568" viewBox="0 0 1024 568"><path d="M237.500 208.400L268.800 205.800 264.500 216.700 445 292.300 442.500 298.200 262 222 257.800 231.800z" fill="#ff2a00"/></svg>
<div class="a" style="left:1007.5px;top:71px;width:17px;height:497px;background:#fafafa;border-left:1px solid #e8e8e8"></div>
<div class="a" style="left:1011.4px;top:73.800px;width:9.500px;height:362.500px;border-radius:4.800px;background:#c1c1c1"></div>
<div class="a" style="left:762px;top:512px;width:141.500px;height:46.500px;border-radius:23.500px;background:#467de2;box-shadow:0 3px 9px rgba(0,0,0,.22)"></div>
<div class="a" style="left:917.5px;top:512px;width:89.500px;height:46.500px;border-radius:23.500px;background:#467de2;box-shadow:0 3px 9px rgba(0,0,0,.22)"></div>
<div class="a" style="left:864.8px;top:524.800px;width:21px;height:21px;border-radius:50%;background:#fff"></div>
<div class="t" style="left:785px;top:525.500px;font-size:15px;line-height:20px;color:#fff;-webkit-text-stroke:0.35px #fff;transform-origin:0 50%;transform:scaleX(.95)">Get Started</div>
<div class="t" style="left:871.600px;top:527.800px;font-size:12px;line-height:15px;font-weight:bold;color:#467de2">2</div>
<div class="t" style="left:934.500px;top:527.500px;font-size:12px;line-height:16px;font-weight:bold;color:#fff;transform-origin:0 50%;transform:scaleX(.95)">Help</div>
<div class="t" style="left:974.500px;top:521.500px;font-size:26px;line-height:30px;color:#fff">?</div>
<svg class="a" style="left:1012px;top:556px" width="12" height="12" viewBox="0 0 12 12"><path d="M12 0v12H0A12 12 0 0 0 12 0z" fill="#000"/></svg>
</body></html>
